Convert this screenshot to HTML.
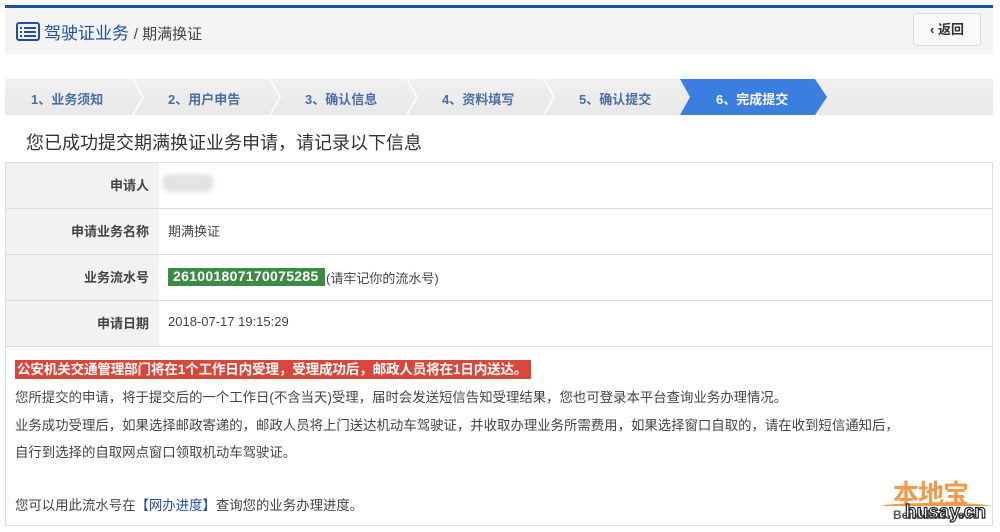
<!DOCTYPE html>
<html><head><meta charset="utf-8"><style>
*{margin:0;padding:0;box-sizing:border-box}
body{width:1000px;height:532px;background:#fff;font-family:"Liberation Sans","Noto Sans CJK SC",sans-serif;position:relative;overflow:hidden;color:#333}
.abs{position:absolute}
</style></head><body>
<div class="abs" style="left:5px;top:5px;width:988px;height:3px;background:#1f4fa6"></div>
<div class="abs" style="left:5px;top:8px;width:988px;height:46px;background:#f4f4f4"></div>
<svg class="abs" style="left:16px;top:22px" width="24" height="19" viewBox="0 0 24 19"><rect x="1" y="1" width="22" height="17" rx="2" fill="none" stroke="#1f4fa6" stroke-width="2"/><rect x="4" y="5" width="2" height="2" fill="#1f4fa6"/><rect x="8" y="5" width="12" height="2" fill="#1f4fa6"/><rect x="4" y="9" width="2" height="2" fill="#1f4fa6"/><rect x="8" y="9" width="12" height="2" fill="#1f4fa6"/><rect x="4" y="13" width="2" height="2" fill="#1f4fa6"/><rect x="8" y="13" width="12" height="2" fill="#1f4fa6"/></svg>
<div class="abs" style="left:44px;top:19px;font-size:17px;color:#1f4fa6;white-space:nowrap">驾驶证业务 <span style="font-size:15px;color:#444">/ 期满换证</span></div>
<div class="abs" style="left:913px;top:13px;width:68px;height:33px;border:1px solid #ddd;border-radius:3px;background:#f8f8f8;font-size:13px;font-weight:bold;color:#333;text-align:center;line-height:31px">‹ 返回</div>

<div class="abs" style="left:5px;top:79px;width:988px;height:36px;background:linear-gradient(#f0f0f0,#e8e8e8)"></div>
<svg class="abs" style="left:5px;top:79px" width="988" height="36"><g fill="none" stroke="#fafafa" stroke-width="2"><path d="M128 0 L138 18 L128 36"/><path d="M265 0 L275 18 L265 36"/><path d="M402 0 L412 18 L402 36"/><path d="M539 0 L549 18 L539 36"/></g><path d="M675 0 L810 0 L822 18 L810 36 L675 36 L685 18 Z" fill="#3a7fe0"/></svg>
<div class="abs" style="top:89px;left:0;font-size:13px;font-weight:bold;color:#4a6fa5;white-space:nowrap">
<span class="abs" style="left:31px">1、业务须知</span><span class="abs" style="left:168px">2、用户申告</span><span class="abs" style="left:305px">3、确认信息</span><span class="abs" style="left:442px">4、资料填写</span><span class="abs" style="left:579px">5、确认提交</span><span class="abs" style="left:716px;color:#fff">6、完成提交</span></div>

<div class="abs" style="left:26px;top:129px;font-size:18px;color:#333;white-space:nowrap">您已成功提交期满换证业务申请，请记录以下信息</div>

<div class="abs" style="left:5px;top:162px;width:988px;height:364px;border:1px solid #ddd"></div>
<div class="abs" style="left:6px;top:163px;width:153px;height:183px;background:#f2f2f2"></div>
<div class="abs" style="left:5px;top:208px;width:988px;height:1px;background:#ddd"></div>
<div class="abs" style="left:5px;top:254px;width:988px;height:1px;background:#ddd"></div>
<div class="abs" style="left:5px;top:300px;width:988px;height:1px;background:#ddd"></div>
<div class="abs" style="left:5px;top:346px;width:988px;height:1px;background:#ddd"></div>
<div class="abs" style="left:0;width:149px;text-align:right;font-size:13px;font-weight:bold;color:#444">
<div class="abs" style="right:0;top:175px;white-space:nowrap">申请人</div>
<div class="abs" style="right:0;top:221px;white-space:nowrap">申请业务名称</div>
<div class="abs" style="right:0;top:267px;white-space:nowrap">业务流水号</div>
<div class="abs" style="right:0;top:313px;white-space:nowrap">申请日期</div></div>
<div class="abs" style="left:162px;top:174px;width:52px;height:18px;border-radius:8px;background:#e4e4e4;filter:blur(2px)"></div>
<div class="abs" style="left:168px;top:221px;font-size:13px;color:#444">期满换证</div>
<div class="abs" style="left:168px;top:268px;width:157px;height:18px;background:#3e8a44"></div>
<div class="abs" style="left:173px;top:268px;font-size:14px;font-weight:bold;color:#fff;letter-spacing:0.3px">261001807170075285</div>
<div class="abs" style="left:326px;top:268px;font-size:13px;color:#444;white-space:nowrap">(请牢记你的流水号)</div>
<div class="abs" style="left:168px;top:314px;font-size:13px;color:#444">2018-07-17 19:15:29</div>

<div class="abs" style="left:15px;top:360px;width:516px;height:19px;background:#d9473a;color:#fff;font-size:13.6px;font-weight:bold;line-height:19px;padding-left:2px;white-space:nowrap;letter-spacing:-0.2px">公安机关交通管理部门将在1个工作日内受理，受理成功后，邮政人员将在1日内送达。</div>
<div class="abs" style="left:15px;font-size:13.4px;color:#444;white-space:nowrap">
<div class="abs" style="top:386px">您所提交的申请，将于提交后的一个工作日(不含当天)受理，届时会发送短信告知受理结果，您也可登录本平台查询业务办理情况。</div>
<div class="abs" style="top:414px">业务成功受理后，如果选择邮政寄递的，邮政人员将上门送达机动车驾驶证，并收取办理业务所需费用，如果选择窗口自取的，请在收到短信通知后，</div>
<div class="abs" style="top:441px">自行到选择的自取网点窗口领取机动车驾驶证。</div>
<div class="abs" style="top:494px">您可以用此流水号在<span style="color:#1f4fa6">【网办进度】</span>查询您的业务办理进度。</div></div>

<div class="abs" style="left:893px;top:474px;font-size:26px;font-weight:bold;color:#f29a4a;white-space:nowrap;letter-spacing:-1px">本地宝</div>
<div class="abs" style="left:882px;top:503px;width:108px;height:6px;border-radius:50%;border-top:3px solid #f29a4a"></div>
<div class="abs" style="left:893px;top:508px;font-size:12px;font-weight:bold;color:#555">Bendibao.com</div>
<div class="abs" style="left:905px;top:502px;font-size:19px;font-weight:bold;color:#fff;-webkit-text-stroke:1.2px #222;white-space:nowrap">husay.cn</div>
</body></html>
